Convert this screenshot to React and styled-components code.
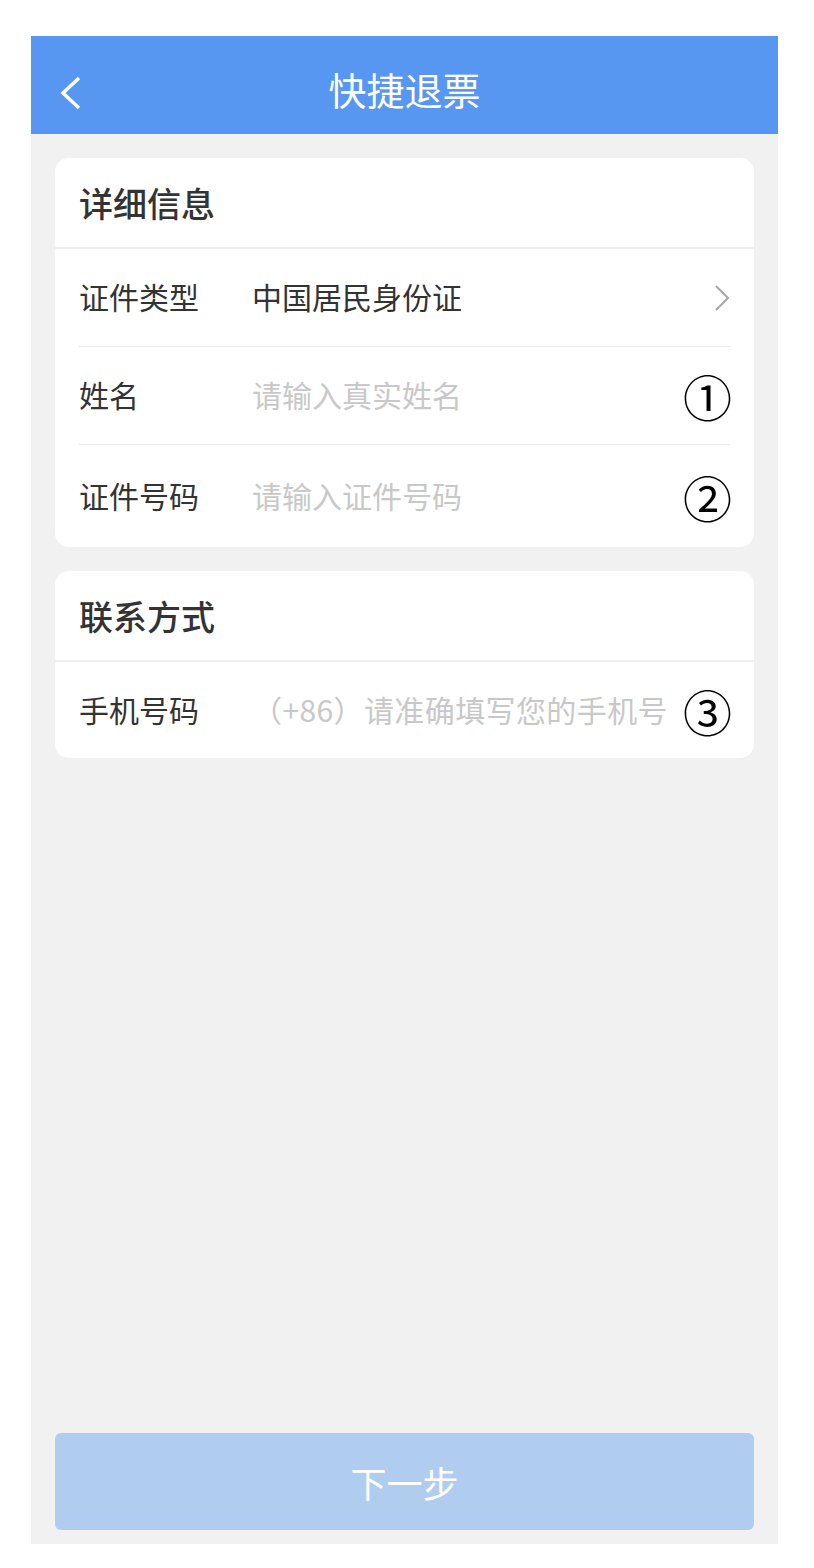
import React from "react";
import styled, { createGlobalStyle } from "styled-components";

const GlobalStyle = createGlobalStyle`
  html, body {
    margin: 0;
    padding: 0;
    background: #ffffff;
  }
  body {
    font-family: "Noto Sans CJK SC", "Noto Sans", sans-serif;
  }
`;

const Page = styled.div`
  padding: 36px 0 0 31px;
`;

const Phone = styled.div`
  width: 747px;
  height: 1508px;
  background: #f1f1f1;
  display: flex;
  flex-direction: column;
`;

const Header = styled.div`
  height: 98px;
  background: #5797f1;
  display: flex;
  align-items: center;
  justify-content: center;
  position: relative;
  flex-shrink: 0;
`;

const BackButton = styled.div`
  position: absolute;
  left: 26px;
  top: 40px;
  width: 28px;
  height: 34px;
`;

const Title = styled.div`
  color: #ffffff;
  font-size: 38px;
  font-weight: 400;
  padding-top: 6px;
`;

const Content = styled.div`
  flex: 1;
  display: flex;
  flex-direction: column;
  gap: 24px;
  padding: 24px 24px 0;
`;

const Card = styled.div`
  background: #ffffff;
  border-radius: 14px;
  overflow: hidden;
`;

const CardTitle = styled.div`
  height: 89px;
  display: flex;
  align-items: center;
  padding: 0 24px;
  font-size: 34px;
  font-weight: 500;
  color: #333333;
  border-bottom: 2px solid #efefef;
`;

const Row = styled.div`
  height: ${(p) => p.$h || 97}px;
  margin: 0 24px;
  display: flex;
  align-items: center;
  border-bottom: ${(p) => (p.$last ? "none" : "1px solid #e8e8e8")};
`;

const Label = styled.div`
  width: 173px;
  flex-shrink: 0;
  font-size: 30px;
  color: #333333;
  margin-top: -3px;
`;

const Value = styled.div`
  flex: 1;
  font-size: 30px;
  color: ${(p) => (p.$placeholder ? "#c8c8c8" : "#333333")};
  letter-spacing: ${(p) => p.$spacing || 0}px;
  white-space: nowrap;
  overflow: hidden;
  margin-top: -3px;
`;

const Circled = styled.div`
  font-size: 49px;
  line-height: 1;
  color: #000000;
  font-family: "Noto Sans CJK SC", sans-serif;
  margin-right: -2px;
`;

const Footer = styled.div`
  padding: 0 24px 14px;
`;

const NextButton = styled.div`
  height: 97px;
  border-radius: 6px;
  background: #b0cdf0;
  color: #ffffff;
  font-size: 36px;
  display: flex;
  align-items: center;
  justify-content: center;
`;

const Chevron = () => (
  <svg width="16" height="26" viewBox="0 0 16 26">
    <path d="M2 1 L14 13 L2 25" fill="none" stroke="#a8a8a8" strokeWidth="2" />
  </svg>
);

export default function App() {
  return (
    <Page>
      <GlobalStyle />
      <Phone>
        <Header>
          <BackButton>
            <svg width="28" height="34" viewBox="0 0 28 34">
              <path d="M22 2 L6 17 L22 32" fill="none" stroke="#ffffff" strokeWidth="3.5" />
            </svg>
          </BackButton>
          <Title>快捷退票</Title>
        </Header>
        <Content>
          <Card>
            <CardTitle>详细信息</CardTitle>
            <Row>
              <Label>证件类型</Label>
              <Value>中国居民身份证</Value>
              <Chevron />
            </Row>
            <Row>
              <Label>姓名</Label>
              <Value $placeholder>请输入真实姓名</Value>
              <Circled>①</Circled>
            </Row>
            <Row $last $h={102}>
              <Label>证件号码</Label>
              <Value $placeholder>请输入证件号码</Value>
              <Circled>②</Circled>
            </Row>
          </Card>
          <Card>
            <CardTitle>联系方式</CardTitle>
            <Row $last $h={96}>
              <Label>手机号码</Label>
              <Value $placeholder $spacing={0.4}>（+86）请准确填写您的手机号</Value>
              <Circled>③</Circled>
            </Row>
          </Card>
        </Content>
        <Footer>
          <NextButton>下一步</NextButton>
        </Footer>
      </Phone>
    </Page>
  );
}
